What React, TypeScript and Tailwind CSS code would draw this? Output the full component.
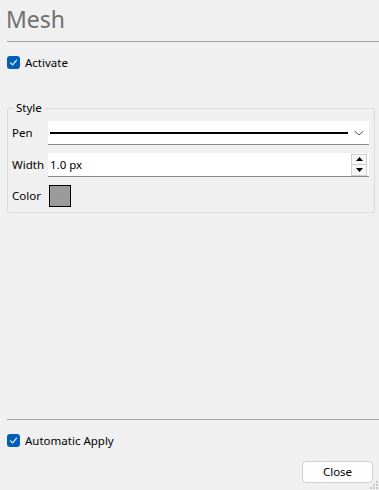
import React from "react";

function Check() {
  return (
    <div className="w-[13px] h-[13px] rounded-[3px] bg-[#005fb8] flex items-center justify-center shrink-0">
      <svg width="9" height="9" viewBox="0 0 9 9" fill="none">
        <path d="M1.5 4.8 L3.6 6.8 L7.6 2.2" stroke="white" strokeWidth="1.1" strokeLinecap="round" strokeLinejoin="round" />
      </svg>
    </div>
  );
}

export default function App() {
  return (
    <div
      className="w-[379px] h-[490px] bg-[#f0f0f0] flex flex-col relative overflow-hidden text-[11.5px] text-black"
      style={{ fontFamily: '"Noto Sans", "Open Sans", sans-serif' }}
    >
      <div className="pl-[6px] pt-[3px] h-[35px] text-[23px] leading-[32px] text-[#707070]">Mesh</div>
      <div className="ml-[7px] mt-[6px] h-px bg-[#a0a0a0]" />
      <div className="ml-[7px] mt-[14px] flex items-center gap-[5px] h-[13px]">
        <Check />
        <span className="leading-[13px]">Activate</span>
      </div>
      <div className="relative mx-[7px] w-[368px] mt-[39px] h-[105px] border border-[#dcdcdc] rounded-[2px] flex flex-col">
        <span className="absolute left-[5px] top-[-9px] bg-[#f0f0f0] px-[3px] leading-[16px]">Style</span>
        <div className="mt-[12px] flex items-center h-[24px]">
          <span className="w-[40px] pl-[4px]">Pen</span>
          <div className="w-[321px] h-[24px] bg-white border-b border-[#8a8a8a] flex items-center pl-[2px] pr-[4px]">
            <div className="flex-1 h-[2px] bg-black" />
            <svg width="12" height="8" viewBox="0 0 12 8" className="ml-[5px]">
              <path d="M1.5 2 L6 6 L10.5 2" stroke="#555" strokeWidth="1" fill="none" />
            </svg>
          </div>
        </div>
        <div className="mt-[8px] flex items-center h-[24px]">
          <span className="w-[40px] pl-[4px]">Width</span>
          <div className="w-[321px] h-[24px] bg-white border-b border-[#8a8a8a] flex items-center pl-[2px] pr-[2px]">
            <span className="flex-1">1.0 px</span>
            <div className="flex flex-col w-[16px]">
              <div className="h-[11px] bg-[#f7f7f7] border border-[#d0d0d0] flex items-center justify-center">
                <svg width="7" height="4" viewBox="0 0 7 4"><path d="M0 4 L3.5 0 L7 4 Z" fill="#000" /></svg>
              </div>
              <div className="h-[11px] bg-[#f7f7f7] border border-t-0 border-[#d0d0d0] flex items-center justify-center">
                <svg width="7" height="4" viewBox="0 0 7 4"><path d="M0 0 L7 0 L3.5 4 Z" fill="#000" /></svg>
              </div>
            </div>
          </div>
        </div>
        <div className="mt-[8px] flex items-center h-[22px]">
          <span className="w-[41px] pl-[4px]">Color</span>
          <div className="w-[22px] h-[22px] border border-black bg-[#9b9b9b]" />
        </div>
      </div>
      <div className="flex-1" />
      <div className="ml-[7px] h-px bg-[#a0a0a0]" />
      <div className="ml-[7px] mt-[14px] flex items-center gap-[5px] h-[13px]">
        <Check />
        <span className="leading-[13px]">Automatic Apply</span>
      </div>
      <div className="flex justify-end pr-[6px] mt-[14px] mb-[7px]">
        <button className="w-[71px] h-[22px] bg-[#fdfdfd] border border-[#d0d0d0] rounded-[4px] text-[11.5px] leading-[20px]">
          Close
        </button>
      </div>
      <svg className="absolute right-0 bottom-0" width="10" height="10" viewBox="0 0 10 10">
        <rect x="7" y="1" width="2" height="2" fill="#c8c8c8" />
        <rect x="4" y="4" width="2" height="2" fill="#c8c8c8" />
        <rect x="7" y="4" width="2" height="2" fill="#c8c8c8" />
        <rect x="1" y="7" width="2" height="2" fill="#c8c8c8" />
        <rect x="4" y="7" width="2" height="2" fill="#c8c8c8" />
        <rect x="7" y="7" width="2" height="2" fill="#c8c8c8" />
      </svg>
    </div>
  );
}
